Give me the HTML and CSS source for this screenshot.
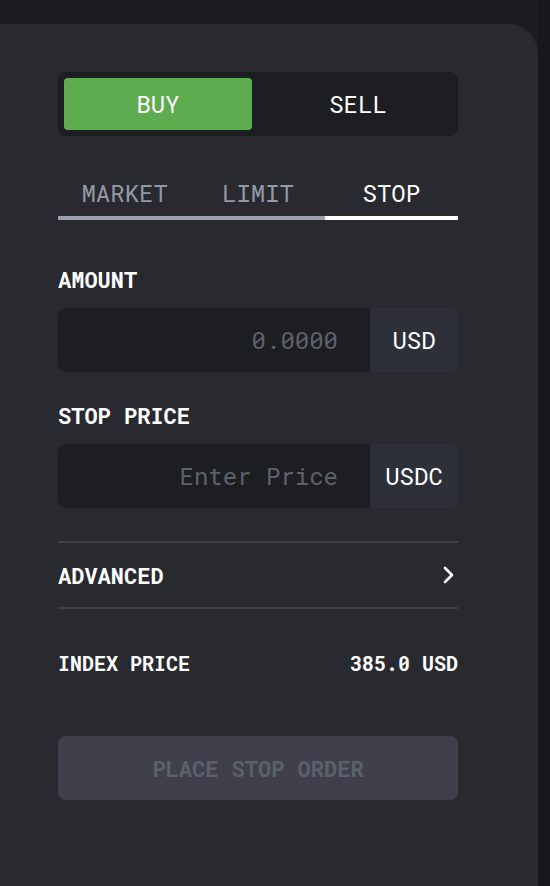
FILE: index.html
```html
<!DOCTYPE html>
<html>
<head>
<meta charset="utf-8">
<link rel="stylesheet" href="styles.css">
</head>
<body>
<div class="main">
  <div class="card">
    <div class="panel">
      <div class="toggle">
        <div class="side side-active">BUY</div>
        <div class="side">SELL</div>
      </div>
      <div class="tabs">
        <div class="tab">MARKET</div>
        <div class="tab">LIMIT</div>
        <div class="tab tab-active">STOP</div>
      </div>
      <div class="label label-first">AMOUNT</div>
      <div class="field">
        <div class="field-input">0.0000</div>
        <div class="field-unit">USD</div>
      </div>
      <div class="label">STOP PRICE</div>
      <div class="field">
        <div class="field-input">Enter Price</div>
        <div class="field-unit">USDC</div>
      </div>
      <div class="advanced">
        <span>ADVANCED</span>
        <svg class="chev" width="14" height="18" viewBox="0 0 14 18"><path d="M3 2 L10 9 L3 16" fill="none" stroke="#ffffff" stroke-width="2.6" stroke-linecap="round" stroke-linejoin="round"/></svg>
      </div>
      <div class="index-row">
        <span>INDEX PRICE</span>
        <span>385.0 USD</span>
      </div>
      <div class="submit">PLACE STOP ORDER</div>
    </div>
  </div>
</div>
<div class="strip"></div>
</body>
</html>
```

FILE: styles.css
```css
html, body {
  margin: 0;
  padding: 0;
}
body {
  background: #1c1d21;
  display: flex;
  height: 886px;
  overflow: hidden;
  font-family: "Roboto Mono", "DejaVu Sans Mono", monospace;
  color: #ffffff;
}
.main {
  flex: 1;
  padding-top: 24px;
  display: flex;
  flex-direction: column;
}
.strip {
  width: 12px;
  background: #17181b;
}
.card {
  flex: 1;
  margin-left: -40px;
  background: #292a2f;
  border-radius: 30px 30px 0 0;
  padding: 48px 0 0 98px;
}
.panel {
  width: 400px;
  display: flex;
  flex-direction: column;
}
.toggle {
  height: 64px;
  background: #1d1e22;
  border-radius: 8px;
  display: flex;
}
.side {
  flex: 1;
  display: flex;
  align-items: center;
  justify-content: center;
  font-size: 24px;
  padding: 6px;
  border-radius: 10px;
  background-clip: content-box;
}
.side-active {
  background-color: #5dac50;
}
.tabs {
  display: flex;
  margin-top: 43px;
}
.tab {
  flex: 1;
  text-align: center;
  font-size: 24px;
  line-height: 28px;
  padding-bottom: 9px;
  color: #9398a6;
  border-bottom: 4px solid #9aa0b0;
}
.tab-active {
  color: #ffffff;
  border-bottom-color: #ffffff;
}
.label {
  font-size: 22px;
  font-weight: bold;
  line-height: 28px;
  margin-top: 30px;
  margin-bottom: 14px;
}
.label-first {
  margin-top: 46px;
}
.field {
  display: flex;
  height: 64px;
  border-radius: 8px;
  overflow: hidden;
}
.field-input {
  flex: 1;
  background: #1d1e22;
  color: #5e626c;
  font-size: 24px;
  display: flex;
  align-items: center;
  justify-content: flex-end;
  padding-right: 32px;
}
.field-unit {
  width: 88px;
  background: #2e3039;
  font-size: 24px;
  display: flex;
  align-items: center;
  justify-content: center;
}
.advanced {
  margin-top: 33px;
  height: 64px;
  border-top: 2px solid #3e3f48;
  border-bottom: 2px solid #3e3f48;
  display: flex;
  align-items: center;
  justify-content: space-between;
  font-size: 22px;
  font-weight: bold;
}
.chev {
  margin-right: 2px;
}
.index-row {
  margin-top: 40px;
  display: flex;
  justify-content: space-between;
  font-size: 20px;
  font-weight: bold;
  line-height: 28px;
}
.submit {
  margin-top: 59px;
  height: 64px;
  border-radius: 8px;
  background: #413f4c;
  color: #5c606c;
  font-size: 22px;
  font-weight: bold;
  display: flex;
  align-items: center;
  justify-content: center;
}
```
